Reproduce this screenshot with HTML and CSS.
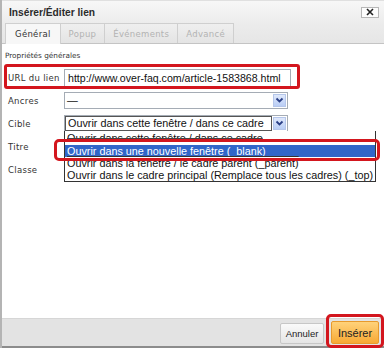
FILE: index.html
```html
<!DOCTYPE html>
<html lang="fr">
<head>
<meta charset="utf-8">
<title>Insérer/Éditer lien</title>
<link rel="stylesheet" href="styles.css">
</head>
<body>
<div class="dialog">
  <div class="titlebar">
    <span class="title">Insérer/Éditer lien</span>
    <span class="close"><svg width="10" height="8" viewBox="0 0 10 8"><path d="M2 1 L8 7 M8 1 L2 7" stroke="#222" stroke-width="1.6" fill="none"/></svg></span>
  </div>
  <div class="tabs">
    <span class="tab active">Général</span>
    <span class="tab">Popup</span>
    <span class="tab">Événements</span>
    <span class="tab">Advancé</span>
  </div>
  <div class="panel">
    <div class="legend">Propriétés générales</div>
    <div class="rows">
      <div class="row"><span class="label">URL du lien</span><div class="input">http://www.over-faq.com/article-1583868.html</div></div>
      <div class="row"><span class="label">Ancres</span><div class="select"><span class="val">—</span><span class="arrow"><svg width="9" height="7" viewBox="0 0 9 7"><path d="M1.5 1.5 L4.5 4.5 L7.5 1.5" stroke="#2a3f86" stroke-width="1.8" fill="none"/></svg></span></div></div>
      <div class="row"><span class="label">Cible</span><div class="select focus"><span class="val">Ouvrir dans cette fenêtre / dans ce cadre</span><span class="arrow"><svg width="9" height="7" viewBox="0 0 9 7"><path d="M1.5 1.5 L4.5 4.5 L7.5 1.5" stroke="#2a3f86" stroke-width="1.8" fill="none"/></svg></span></div></div>
      <div class="row"><span class="label">Titre</span></div>
      <div class="row"><span class="label">Classe</span></div>
    </div>
    <ul class="dropdown">
      <li class="cut">Ouvrir dans cette fenêtre / dans ce cadre</li>
      <li class="sel">Ouvrir dans une nouvelle fenêtre (_blank)</li>
      <li class="over">Ouvrir dans la fenêtre / le cadre parent (_parent)</li>
      <li>Ouvrir dans le cadre principal (Remplace tous les cadres) (_top)</li>
    </ul>
    <div class="mark mark-url"></div>
    <div class="mark mark-opt"></div>
  </div>
  <div class="footer">
    <button class="btn cancel">Annuler</button>
    <button class="btn insert">Insérer</button>
    <div class="mark mark-btn"></div>
  </div>
</div>
</body>
</html>
```
FILE: styles.css
```css
* { box-sizing: border-box; }
html, body { margin: 0; padding: 0; background: #fff; }
body { width: 384px; height: 348px; overflow: hidden; }

.dialog {
  width: 384px;
  height: 348px;
  display: flex;
  flex-direction: column;
  border-left: 2px solid #b4b4b4;
  background: #fff;
}

.titlebar {
  height: 23px;
  display: flex;
  align-items: center;
  justify-content: space-between;
  padding: 0 5px 0 7px;
  background: linear-gradient(#f7f7f7, #ececec);
  border-top: 1px solid #e0e0e0;
}
.title {
  font: bold 10.2px "Liberation Sans", Arial, sans-serif;
  color: #2b2b2b;
}
.close {
  width: 18px;
  height: 11px;
  border: 1px solid #b7b7b7;
  background: #fdfdfd;
  display: flex;
  align-items: center;
  justify-content: center;
}

.tabs {
  height: 21px;
  display: flex;
  align-items: flex-end;
  padding-left: 3px;
  background: linear-gradient(#ececec, #e6e6e6);
  border-bottom: 1px solid #c4c4c4;
}
.tab {
  height: 20px;
  display: flex;
  align-items: center;
  padding: 0 8px;
  font: 8.5px "DejaVu Sans", Verdana, sans-serif;
  color: #b3b3b3;
  letter-spacing: 0.3px;
  border: 1px solid #cfcfcf;
  border-bottom: none;
  border-left: none;
  background: linear-gradient(#efefef, #e4e4e4);
}
.tab:first-child { border-left: 1px solid #cfcfcf; padding: 0 9px; }
.tab.active {
  color: #333;
  background: #f7f7f7;
  height: 21px;
  margin-bottom: -1px;
}

.panel {
  position: relative;
  flex: 1;
  padding: 6px 0 0 3px;
  background: #fff;
}
.legend {
  font: 7.3px "DejaVu Sans", Verdana, sans-serif;
  line-height: 11px;
  color: #333;
}
.rows { margin-top: 5px; }
.row {
  height: 23px;
  display: flex;
  align-items: center;
}
.label {
  width: 59px;
  padding-left: 3px;
  font: 8.5px "DejaVu Sans", Verdana, sans-serif;
  letter-spacing: 0.3px;
  color: #333;
}
.input {
  width: 227px;
  height: 18px;
  border: 1px solid #a5acb5;
  padding: 0 3px;
  font: 10.6px "Liberation Sans", Arial, sans-serif;
  line-height: 16px;
  color: #111;
  white-space: nowrap;
}
.select {
  width: 224px;
  height: 17px;
  display: flex;
  border: 1px solid #a5acb5;
}
.select .val {
  flex: 1;
  padding: 0 2px;
  font: 10.8px "Liberation Sans", Arial, sans-serif;
  line-height: 15px;
  color: #111;
  white-space: nowrap;
  overflow: hidden;
}
.select.focus .val { border: 1px solid #555; line-height: 13px; }
.select .arrow {
  width: 13px;
  margin: 1px;
  background: linear-gradient(#dfe8fb, #b9cdf5);
  border: 1px solid #b5c6ea;
  display: flex;
  align-items: center;
  justify-content: center;
}

.dropdown {
  position: absolute;
  left: 62px;
  top: 87px;
  width: 312px;
  margin: 0;
  padding: 0;
  list-style: none;
  border: 1px solid #333;
  border-top: none;
  background: #fff;
}
.dropdown li {
  height: 12px;
  padding-left: 2px;
  font: 10.8px "Liberation Sans", Arial, sans-serif;
  line-height: 12px;
  color: #111;
  white-space: nowrap;
}
.dropdown li.cut {
  height: 14px;
  line-height: 12px;
  padding-top: 1px;
  text-decoration: line-through;
  text-decoration-color: #444;
}
.dropdown li.sel { background: #3166c9; color: #fff; }
.dropdown li.over { text-decoration: overline; text-decoration-color: #333; }

.mark {
  position: absolute;
  border: 3px solid #d3161e;
  border-radius: 3px;
}
.mark-url { left: 2px; top: 20px; width: 296px; height: 25px; }
.mark-opt { left: 52px; top: 95px; width: 326px; height: 22px; border-radius: 5px; }

.footer {
  position: relative;
  height: 30px;
  display: flex;
  align-items: center;
  justify-content: flex-end;
  gap: 7px;
  padding-right: 5px;
  background: #e3e3e3;
  border-top: 1px solid #d6d6d6;
  border-bottom: 2px solid #8c8c8c;
}
.btn {
  margin: 0;
  padding: 0;
  font-family: "Liberation Sans", Arial, sans-serif;
  color: #222;
  cursor: default;
}
.cancel {
  width: 44px;
  height: 21px;
  font-size: 9.5px;
  border: 1px solid #c7c7c7;
  border-radius: 2px;
  background: linear-gradient(#fafafa, #e5e5e5);
  margin-top: 2px;
}
.insert {
  width: 48px;
  height: 23px;
  font-size: 11px;
  border: 1px solid #e89a2c;
  border-radius: 2px;
  background: linear-gradient(#ffd27a, #f7a935);
}
.mark-btn { right: 0px; top: -5px; width: 58px; height: 34px; border-radius: 5px; }
```
